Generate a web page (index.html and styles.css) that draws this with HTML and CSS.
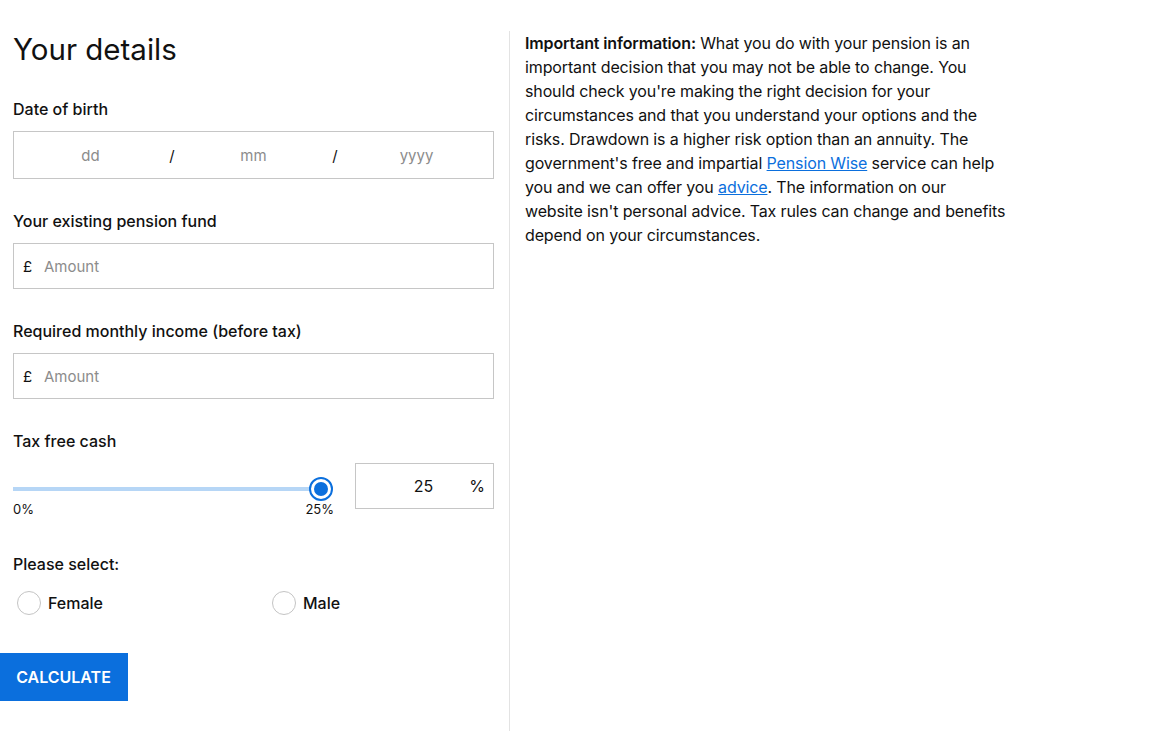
FILE: index.html
```html
<!DOCTYPE html>
<html lang="en">
<head>
<meta charset="utf-8">
<title>Your details</title>
<link rel="stylesheet" href="styles.css">
</head>
<body>
<div class="page">
  <div class="form-col">
    <div class="fields">
      <h1 class="title">Your details</h1>

      <div class="field">
        <div class="label">Date of birth</div>
        <div class="box date-box">
          <input class="date-input" type="text" placeholder="dd">
          <span class="slash">/</span>
          <input class="date-input" type="text" placeholder="mm">
          <span class="slash">/</span>
          <input class="date-input" type="text" placeholder="yyyy">
        </div>
      </div>

      <div class="field">
        <div class="label">Your existing pension fund</div>
        <div class="box money-box">
          <span class="currency">£</span>
          <input class="money-input" type="text" placeholder="Amount">
        </div>
      </div>

      <div class="field">
        <div class="label">Required monthly income (before tax)</div>
        <div class="box money-box">
          <span class="currency">£</span>
          <input class="money-input" type="text" placeholder="Amount">
        </div>
      </div>

      <div class="field">
        <div class="label">Tax free cash</div>
        <div class="slider-row">
          <div class="slider">
            <div class="track-wrap">
              <div class="track"></div>
              <div class="thumb"><div class="thumb-dot"></div></div>
            </div>
            <div class="scale"><span>0%</span><span>25%</span></div>
          </div>
          <div class="box pct-box">
            <input class="pct-input" type="text" value="25">
            <span class="pct-sign">%</span>
          </div>
        </div>
      </div>

      <div class="field select-field">
        <div class="label">Please select:</div>
        <div class="radios">
          <label class="radio"><span class="radio-circle"></span><span class="radio-text">Female</span></label>
          <label class="radio"><span class="radio-circle"></span><span class="radio-text">Male</span></label>
        </div>
      </div>
    </div>
    <button class="calc-btn" type="button">CALCULATE</button>
  </div>

  <div class="info-col">
    <p class="info"><strong>Important information:</strong> What you do with your pension is an important decision that you may not be able to change. You should check you're making the right decision for your circumstances and that you understand your options and the risks. Drawdown is a higher risk option than an annuity. The government's free and impartial <a href="#">Pension Wise</a> service can help you and we can offer you <a href="#">advice</a>. The information on our<br>website isn't personal advice. Tax rules can change and benefits depend on your circumstances.</p>
  </div>
</div>
</body>
</html>
```

FILE: styles.css
```css
* { box-sizing: border-box; }

html, body {
  margin: 0;
  padding: 0;
  background: #ffffff;
}

body {
  font-family: Inter, "Noto Sans", "Liberation Sans", sans-serif;
  color: #111111;
}

.page {
  display: flex;
  align-items: stretch;
  min-height: 731px;
  padding-top: 31px;
}

.form-col {
  width: 509px;
  flex: 0 0 509px;
}

.fields {
  padding-left: 13px;
  width: 494px;
}

.title {
  margin: 0;
  font-size: 29.5px;
  line-height: 36px;
  font-weight: 400;
  color: #111;
}

.field {
  margin-top: 31px;
}

.label {
  font-size: 16px;
  line-height: 22px;
  font-weight: 500;
  margin-bottom: 11px;
  height: 22px;
}

.box {
  border: 1px solid #c6c6c6;
  background: #fff;
  display: flex;
  align-items: center;
}

.date-box {
  height: 48px;
  padding: 0;
}

.date-input {
  flex: 0 0 153px;
  width: 153px;
  border: 0;
  outline: none;
  background: transparent;
  text-align: center;
  font-family: inherit;
  font-size: 15px;
  color: #111;
  padding: 0;
  height: 44px;
}

.slash {
  flex: 0 0 10px;
  text-align: center;
  font-size: 15px;
  color: #111;
}

input::placeholder {
  color: #8c8c8c;
  opacity: 1;
}

.money-box {
  height: 46px;
  padding-left: 9px;
}

.currency {
  font-size: 15px;
  width: 21px;
  color: #111;
}

.money-input {
  flex: 1;
  border: 0;
  outline: none;
  font-family: inherit;
  font-size: 15px;
  padding: 0;
  height: 40px;
  background: transparent;
}

.slider-row {
  display: flex;
  align-items: flex-start;
}

.slider {
  flex: 0 0 320px;
  width: 320px;
  padding-top: 14px;
}

.track-wrap {
  position: relative;
  height: 24px;
}

.track {
  position: absolute;
  left: 0;
  right: 10px;
  top: 10px;
  height: 4px;
  background: #b6d6f6;
}

.thumb {
  position: absolute;
  right: 0;
  top: 0;
  width: 24px;
  height: 24px;
  border-radius: 50%;
  border: 2px solid #0b6fdd;
  background: #fff;
  display: flex;
  align-items: center;
  justify-content: center;
}

.thumb-dot {
  width: 14px;
  height: 14px;
  border-radius: 50%;
  background: #0b6fdd;
}

.scale {
  display: flex;
  justify-content: space-between;
  font-size: 13px;
  line-height: 16px;
  margin-right: -1px;
  color: #111;
}

.pct-box {
  margin-left: 22px;
  flex: 0 0 139px;
  width: 139px;
  height: 46px;
  padding-right: 8px;
}

.pct-input {
  flex: 1;
  min-width: 0;
  border: 0;
  outline: none;
  text-align: right;
  font-family: inherit;
  font-size: 16px;
  color: #111;
  background: transparent;
  padding: 0;
}

.pct-sign {
  margin-left: 36px;
  font-size: 16px;
}

.select-field {
  margin-top: 36px;
}

.radios {
  display: grid;
  grid-template-columns: 255px 255px;
  padding-left: 4px;
  margin-top: 16px;
}

.radio {
  display: flex;
  align-items: center;
  gap: 7px;
}

.radio-circle {
  width: 24px;
  height: 24px;
  border-radius: 50%;
  border: 1px solid #c4c4c4;
  background: #fff;
}

.radio-text {
  font-size: 16px;
  font-weight: 500;
  line-height: 24px;
}

.calc-btn {
  display: block;
  margin-top: 38px;
  height: 48px;
  width: 128px;
  border: 0;
  background: #0b6fdd;
  color: #fff;
  font-family: inherit;
  font-size: 16px;
  font-weight: 600;
  padding: 0 1px 0 0;
  text-align: center;
  cursor: pointer;
}

.info-col {
  border-left: 1px solid #e3e3e3;
  padding-left: 15px;
  width: 501px;
}

.info {
  margin: 0;
  font-size: 16px;
  line-height: 24px;
  letter-spacing: -0.13px;
  color: #111;
}

.info strong {
  font-weight: 600;
}

.info a {
  color: #0b6fdd;
  text-decoration: underline;
}
```
